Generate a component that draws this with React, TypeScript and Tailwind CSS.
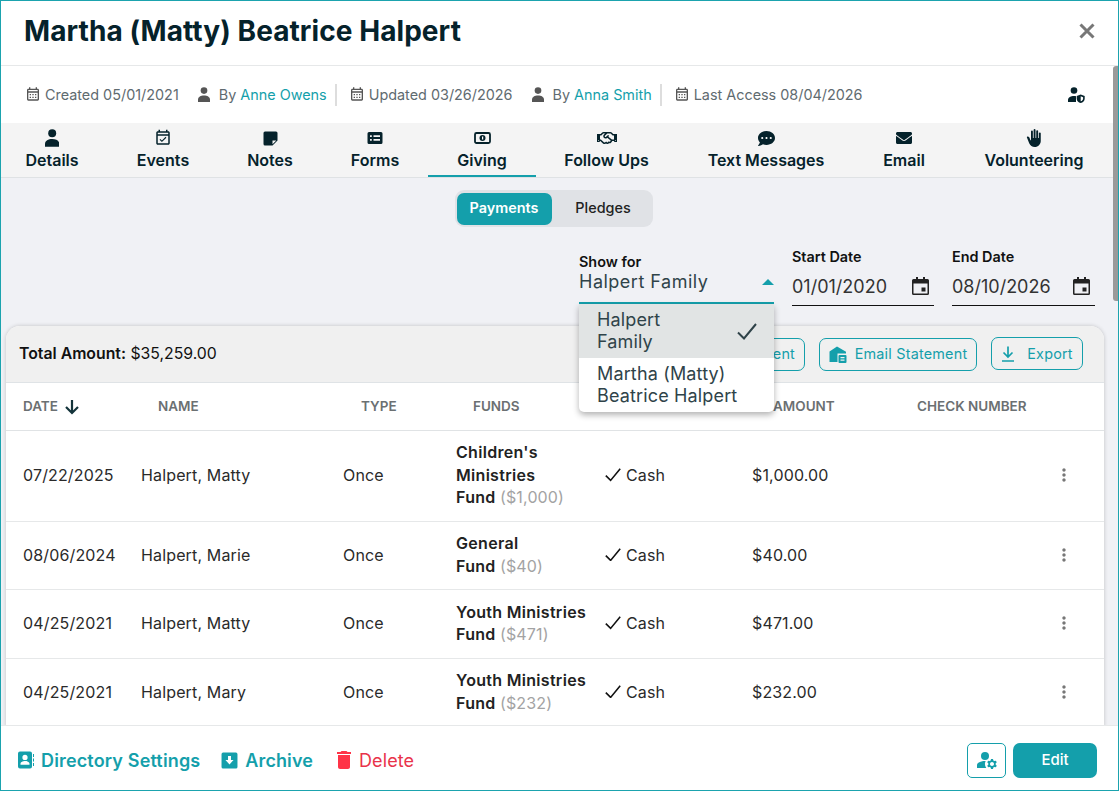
import type { ReactNode } from 'react';
import { FaCommentDots, FaEnvelope, FaRegHandshake } from 'react-icons/fa';
import {
  MdBackHand,
  MdDelete,
  MdManageAccounts,
  MdMoreVert,
  MdOutlineCalendarMonth,
  MdOutlineEventAvailable,
} from 'react-icons/md';

// ─── Drawn icons ──────────────────────────────────────────────────────────────

function PersonIcon({ size = 18, color = '#05222b' }: { size?: number; color?: string }) {
  return (
    <svg width={size * 0.8} height={size} viewBox="0 0 13 16" fill={color}>
      <circle cx="6.500" cy="3.800" r="3.600" />
      <path d="M0 16v-2.500C0 10.600 3 9 6.500 9S13 10.600 13 13.500V16z" />
    </svg>
  );
}

function CloseIcon() {
  return (
    <svg width="16" height="16" viewBox="0 0 16 16" fill="none" stroke="#777" strokeWidth="3">
      <path d="M1.500 1.500l13 13M14.500 1.500l-13 13" />
    </svg>
  );
}

function SortArrow() {
  return (
    <svg width="16" height="16" viewBox="0 0 16 16" fill="none" stroke="#14343b" strokeWidth="2.200">
      <path d="M8 1v13M2 8l6 6 6-6" />
    </svg>
  );
}

function NoteIcon() {
  return (
    <svg width="15" height="15" viewBox="0 0 15 15" fill="#05222b">
      <path fillRule="evenodd" d="M2 0.500h11a1.500 1.500 0 0 1 1.500 1.500v7.500l-5 5H2A1.500 1.500 0 0 1 0.500 13V2A1.500 1.500 0 0 1 2 0.500zM9.500 13.300l3.800-3.800H9.500z" />
    </svg>
  );
}

function FormIcon() {
  return (
    <svg width="16" height="14" viewBox="0 0 16 14" fill="#05222b">
      <path fillRule="evenodd" d="M2 1h12a1.500 1.500 0 0 1 1.500 1.500v9A1.500 1.500 0 0 1 14 13H2a1.500 1.500 0 0 1-1.500-1.500v-9A1.500 1.500 0 0 1 2 1zM3 4.200v1.800h1.800V4.200zM6.500 4.200v1.800H13V4.200zM3 8v1.800h1.800V8zM6.500 8v1.800H13V8z" />
    </svg>
  );
}

function BillIcon() {
  return (
    <svg width="17" height="14" viewBox="0 0 17 14">
      <rect x="1" y="2" width="15" height="10" rx="1.500" fill="none" stroke="#05222b" strokeWidth="1.800" />
      <circle cx="8.500" cy="7" r="3" fill="#05222b" />
      <rect x="8" y="5.500" width="1.200" height="3" fill="#fff" />
    </svg>
  );
}

function PersonShield() {
  return (
    <svg width="17" height="16" viewBox="0 0 17 16" fill="#05222b">
      <circle cx="6" cy="3.500" r="3.300" />
      <path d="M0 15v-2c0-2.600 3-4 6-4 0.800 0 1.500 0.100 2 0.200V15z" />
      <path fillRule="evenodd" d="M12.700 7.500l4 1.500v2.700c0 2.100-1.700 3.800-4 4.300-2.300-0.500-4-2.200-4-4.300V9zM12.700 9.300v5c1.300-0.400 2.400-1.400 2.400-2.600v-1.500z" />
    </svg>
  );
}

function CheckMark({ size }: { size: number }) {
  return (
    <svg width={size} height={size * 0.85} viewBox="0 0 20 17" fill="none" stroke="currentColor" strokeWidth="2">
      <path d="M1 9.500l6 6L19 1" />
    </svg>
  );
}

function CalendarDate() {
  return (
    <svg width="17" height="18" viewBox="0 0 17 18" fill="#222">
      <path fillRule="evenodd" d="M4 0h2v2h5V0h2v2h2.500A1.500 1.500 0 0 1 17 3.500v13a1.500 1.500 0 0 1-1.500 1.500h-14A1.500 1.500 0 0 1 0 16.500v-13A1.500 1.500 0 0 1 1.500 2H4zM1.500 6.500v10h14v-10z" />
      <rect x="9.500" y="10.500" width="4" height="4" />
    </svg>
  );
}

function MailHouse() {
  return (
    <svg width="18" height="17" viewBox="0 0 18 17" fill="#149fab">
      <path d="M8 0.500L0.500 5.500V16h8V7.500h8.500v-1.800z" />
      <path fillRule="evenodd" d="M10.500 9h6a1 1 0 0 1 1 1v6a1 1 0 0 1-1 1h-6a1 1 0 0 1-1-1v-6a1 1 0 0 1 1-1zM11.500 11v1.200h4V11zM11.500 13.500v1.200h4v-1.200z" />
    </svg>
  );
}

function ExportIcon() {
  return (
    <svg width="14" height="16" viewBox="0 0 14 16" fill="none" stroke="#149fab" strokeWidth="1.700">
      <path d="M7 0.500v10M2.500 6.500L7 11l4.500-4.500M1 15h12" />
    </svg>
  );
}

function DirectoryIcon() {
  return (
    <svg width="16" height="18" viewBox="0 0 16 18" fill="#149fab">
      <path fillRule="evenodd" d="M2 0.500h10a2 2 0 0 1 2 2v13a2 2 0 0 1-2 2H2a2 2 0 0 1-2-2v-13a2 2 0 0 1 2-2zM7 3.800a2.600 2.600 0 1 0 0 5.200 2.600 2.600 0 0 0 0-5.200zM2.500 13.800h9v-1.300c0-1.600-3-2.500-4.500-2.500s-4.500 0.900-4.500 2.500z" />
      <rect x="15" y="3" width="1" height="3" />
      <rect x="15" y="7.500" width="1" height="3" />
      <rect x="15" y="12" width="1" height="3" />
    </svg>
  );
}

function ArchiveIcon() {
  return (
    <svg width="17" height="17" viewBox="0 0 16 16" fill="#149fab">
      <path fillRule="evenodd" d="M2 0.500h12a1.500 1.500 0 0 1 1.500 1.500v12a1.500 1.500 0 0 1-1.500 1.500H2A1.500 1.500 0 0 1 0.500 14V2A1.500 1.500 0 0 1 2 0.500zM6.600 3.800v3.700H4.200L8 11.700l3.800-4.200H9.400V3.800z" />
    </svg>
  );
}

// ─── Data ─────────────────────────────────────────────────────────────────────

const tabs = [
  { label: 'Details', icon: <PersonIcon />, cls: 'w-[102px]' },
  { label: 'Events', icon: <MdOutlineEventAvailable className="text-[18px]" />, cls: 'w-[120px]' },
  { label: 'Notes', icon: <NoteIcon />, cls: 'w-[94px]' },
  { label: 'Forms', icon: <FormIcon />, cls: 'w-[111px] pl-[5px]' },
  { label: 'Giving', icon: <BillIcon />, cls: 'w-[108px]', active: true },
  { label: 'Follow Ups', icon: <FaRegHandshake className="text-[20px]" />, cls: 'w-[141px]' },
  { label: 'Text Messages', icon: <FaCommentDots className="text-[17px]" />, cls: 'w-[178px]' },
  { label: 'Email', icon: <FaEnvelope className="text-[16px]" />, cls: 'w-[98px]' },
  { label: 'Volunteering', icon: <MdBackHand className="text-[18px]" />, cls: 'w-[162px]' },
];

const rows = [
  { date: '07/22/2025', name: 'Halpert, Matty', fund: ["Children's", 'Ministries'], part: '($1,000)', amount: '$1,000.00', height: 'h-[91px]' },
  { date: '08/06/2024', name: 'Halpert, Marie', fund: ['General'], part: '($40)', amount: '$40.00', height: 'h-[68px]' },
  { date: '04/25/2021', name: 'Halpert, Matty', fund: ['Youth Ministries'], part: '($471)', amount: '$471.00', height: 'h-[69px]' },
  { date: '04/25/2021', name: 'Halpert, Mary', fund: ['Youth Ministries'], part: '($232)', amount: '$232.00', height: 'h-[68px]' },
];

// ─── Small pieces ─────────────────────────────────────────────────────────────

function CreatedStamp({ children }: { children: ReactNode }) {
  return (
    <span className="flex items-center gap-[4px] text-[14.4px] text-[#5f6b70]">
      <MdOutlineCalendarMonth className="text-[16px] text-[#555]" />
      <span>{children}</span>
    </span>
  );
}

function ByStamp({ name }: { name: string }) {
  return (
    <span className="ml-[19px] flex items-center gap-[9px] text-[14.4px] text-[#5f6b70]">
      <PersonIcon size={15} color="#555" />
      <span>By <span className="text-[#149fab]">{name}</span></span>
    </span>
  );
}

function DateField({ label, value, width }: { label: string; value: string; width: string }) {
  return (
    <div className={`${width} flex flex-col -mt-[1px]`}>
      <span className="text-[14.4px] font-semibold leading-[17px] text-[#111]">{label}</span>
      <div className="flex items-center justify-between h-[41px] pt-[2px] border-b border-[#111] text-[18px] text-[#333]">
        <span>{value}</span>
        <span className="mr-[5px]"><CalendarDate /></span>
      </div>
    </div>
  );
}

function OutlineButton({ icon, children, cls }: { icon?: ReactNode; children: ReactNode; cls: string }) {
  return (
    <button type="button" className={`${cls} h-[33px] flex items-center rounded-[7px] border border-[#149fab] text-[14.4px] tracking-[0.2px] text-[#149fab]`}>
      {icon}
      {children}
    </button>
  );
}

function HeaderCell({ width, children }: { width: string; children: ReactNode }) {
  return <div className={`${width} shrink-0 flex items-center gap-[6px] text-[13.500px] font-semibold text-[#6b7072]`}>{children}</div>;
}

// ─── Main export ──────────────────────────────────────────────────────────────

export default function App() {
  return (
    <div className="relative w-[1119px] h-[791px] flex flex-col overflow-hidden bg-white border border-[#1ba3ae] font-['Inter',sans-serif] text-[#05222b]">
      {/* Title */}
      <header className="h-[65px] shrink-0 flex items-center justify-between pl-[23px] pr-[23px] pb-[4px] border-b border-[#e6e8e9]">
        <h1 className="text-[28px] tracking-[0.07px] font-bold text-[#05222b]">Martha (Matty) Beatrice Halpert</h1>
        <CloseIcon />
      </header>

      {/* Audit row */}
      <div className="h-[57px] shrink-0 flex items-center pl-[24px] pr-[33px]">
        <CreatedStamp>Created 05/01/2021</CreatedStamp>
        <ByStamp name="Anne Owens" />
        <span className="w-[2px] h-[22px] bg-[#ddd] ml-[8px] mr-[12px]" />
        <CreatedStamp>Updated 03/26/2026</CreatedStamp>
        <ByStamp name="Anna Smith" />
        <span className="w-[2px] h-[22px] bg-[#ddd] ml-[8px] mr-[12px]" />
        <CreatedStamp>Last Access 08/04/2026</CreatedStamp>
        <span className="ml-auto"><PersonShield /></span>
      </div>

      {/* Tabs */}
      <nav className="h-[55px] shrink-0 flex bg-[#f4f4f4] border-b border-[#dfe2e4]">
        {tabs.map((tab) => (
          <div key={tab.label} className={`${tab.cls} shrink-0 flex flex-col items-center pt-[6px] ${tab.active ? 'border-b-2 border-[#149fab] h-[54px]' : ''}`}>
            <span className="h-[18px] flex items-center text-[#05222b]">{tab.icon}</span>
            <span className="text-[16px] font-semibold leading-[22px] mt-[2px]">{tab.label}</span>
          </div>
        ))}
      </nav>

      {/* Scrolling body */}
      <main className="flex-1 min-h-0 overflow-hidden bg-[#f0f1f5] pl-[5px] pr-[14px]">
        <div className="flex justify-center pt-[12px] pr-[3px]">
          <div className="flex h-[37px] w-[198px] items-center rounded-[9px] bg-[#e0e2e6] p-[2px]">
            <span className="w-[95px] h-[32px] flex items-center justify-center rounded-[7px] bg-[#149fab] text-white text-[14.4px] font-semibold pb-[1px]">Payments</span>
            <span className="flex-1 text-center text-[14.4px] font-medium text-[#222] pl-[4px] pb-[1px]">Pledges</span>
          </div>
        </div>

        <div className="flex justify-end gap-[18px] h-[99px] pt-[22px] pr-[9px]">
          <div className="w-[195px] flex flex-col pt-[4px] border-b-2 border-[#149fab] h-[55px]">
            <span className="text-[14.4px] font-semibold leading-[17px] text-[#111]">Show for</span>
            <div className="flex items-center justify-between text-[18px] text-[#2f4349] tracking-[0.5px] leading-[24px]">
              Halpert Family
              <span className="w-0 h-0 border-x-[6px] border-x-transparent border-b-[6px] border-b-[#149fab]" />
            </div>
          </div>
          <DateField label="Start Date" value="01/01/2020" width="w-[142px]" />
          <DateField label="End Date" value="08/10/2026" width="w-[143px]" />
        </div>

        {/* Payments card */}
        <section className="rounded-t-[14px] bg-white shadow-[0_0_4px_rgba(0,0,0,0.2)] w-[1098px]">
          <div className="h-[57px] flex items-center justify-between pl-[13px] pr-[21px] bg-[#f0f0f0] rounded-t-[14px] border-b border-[#dfe3e6]">
            <span className="text-[15.800px] text-[#111]"><b className="font-semibold">Total Amount:</b> $35,259.00</span>
            <div className="flex gap-[14px] items-center">
              <OutlineButton cls="w-[100px] justify-end pr-[9px]">Statement</OutlineButton>
              <OutlineButton cls="w-[158px] justify-center gap-[8px]" icon={<MailHouse />}>Email Statement</OutlineButton>
              <OutlineButton cls="w-[92px] justify-center gap-[12px] -mt-[1px]" icon={<ExportIcon />}>Export</OutlineButton>
            </div>
          </div>

          <div className="h-[48px] flex items-center pl-[17px] border-b border-[#e0e3e5]">
            <HeaderCell width="w-[135px]">DATE <SortArrow /></HeaderCell>
            <HeaderCell width="w-[203px]">NAME</HeaderCell>
            <HeaderCell width="w-[112px]">TYPE</HeaderCell>
            <HeaderCell width="w-[300px]">FUNDS</HeaderCell>
            <HeaderCell width="w-[144px]">AMOUNT</HeaderCell>
            <HeaderCell width="w-[160px]">CHECK NUMBER</HeaderCell>
          </div>

          {rows.map((row, i) => (
            <div key={i} className={`${row.height} flex items-center pl-[17px] pb-[2px] text-[16px] tracking-[0.15px] text-[#2a2a2a] border-b border-[#e6e8e9]`}>
              <span className="w-[118px] shrink-0">{row.date}</span>
              <span className="w-[202px] shrink-0">{row.name}</span>
              <span className="w-[113px] shrink-0">Once</span>
              <div className="w-[149px] shrink-0 leading-[22.500px] font-semibold tracking-[0.3px] text-[#222]">
                {row.fund.map((line) => <div key={line}>{line}</div>)}
                <div>Fund <span className="font-normal text-[#a3a3a3] tracking-[0.15px]">{row.part}</span></div>
              </div>
              <span className="w-[147px] shrink-0 flex items-center gap-[5px]"><span className="text-[#111]"><CheckMark size={16} /></span>Cash</span>
              <span className="w-[300px] shrink-0">{row.amount}</span>
              <MdMoreVert className="text-[20px] text-[#777] ml-[2px]" />
            </div>
          ))}
        </section>
      </main>

      {/* Footer */}
      <footer className="h-[65px] shrink-0 flex items-center pl-[17px] pr-[21px] pt-[4px] border-t border-[#e6e8e9] bg-white">
        <span className="flex items-center gap-[7px] text-[18px] tracking-[0.15px] font-semibold text-[#149fab]"><DirectoryIcon />Directory Settings</span>
        <span className="ml-[21px] flex items-center gap-[7px] text-[18px] tracking-[0.1px] font-semibold text-[#149fab]"><ArchiveIcon />Archive</span>
        <span className="ml-[19px] flex items-center gap-[3px] text-[18px] tracking-[0.1px] text-[#e9334a]"><MdDelete className="text-[24px] text-[#ff3347]" />Delete</span>
        <button type="button" className="ml-auto w-[39px] h-[35px] flex items-center justify-center rounded-[5px] border border-[#149fab] text-[24px] text-[#149fab]"><MdManageAccounts /></button>
        <button type="button" className="ml-[7px] w-[84px] h-[35px] rounded-[7px] bg-[#149fab] text-white text-[15px] font-medium">Edit</button>
      </footer>

      {/* Open dropdown */}
      <div className="absolute left-[578px] top-[303px] w-[195px] rounded-b-[5px] bg-white shadow-[0_3px_6px_rgba(0,0,0,0.3)] text-[18px] leading-[22px] text-[#2f4349] tracking-[0.15px] overflow-hidden">
        <div className="h-[54px] flex items-center justify-between pl-[18px] pr-[17px] bg-[#e1e4e4]">
          <span>Halpert<br />Family</span>
          <CheckMark size={20} />
        </div>
        <div className="h-[54px] flex items-center pl-[18px]"><span>Martha (Matty)<br />Beatrice Halpert</span></div>
      </div>

      {/* Scrollbar thumb */}
      <div className="absolute right-0 top-[65px] w-[5px] h-[235px] rounded-l-[3px] bg-[#9a9a9a]" />
    </div>
  );
}
